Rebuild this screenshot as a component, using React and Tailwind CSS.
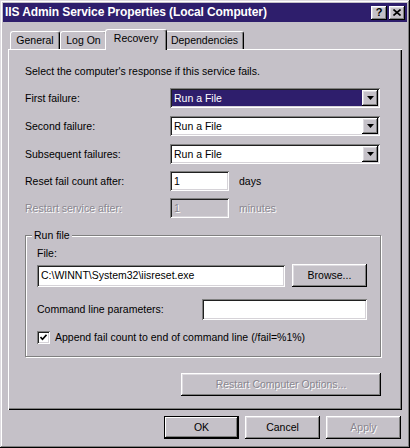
const raised =
  'shadow-[inset_-1px_-1px_0_#000,inset_1px_1px_0_#fff,inset_-2px_-2px_0_#808080,inset_2px_2px_0_#dedbe0]'
const sunken =
  'shadow-[inset_1px_1px_0_#808080,inset_-1px_-1px_0_#fff,inset_2px_2px_0_#202020,inset_-2px_-2px_0_#d6d3d8]'
const disabledText = 'text-[#8a8790] [text-shadow:1px_1px_0_#fff]'

function Arrow() {
  return (
    <div className={`w-[16px] h-[16px] bg-[#c5c1c8] flex items-center justify-center ${raised}`}>
      <svg width="7" height="4" viewBox="0 0 7 4">
        <path d="M0 0h7L3.5 4z" fill="#000" />
      </svg>
    </div>
  )
}

function Combo({ value, selected }) {
  return (
    <div className={`w-[210px] h-[20px] bg-white flex items-center p-[2px] ${sunken}`}>
      <div
        className={`flex-1 h-full flex items-center pl-[2px] ${selected ? 'bg-[#2e1e6c] text-white' : ''}`}
      >
        {value}
      </div>
      <Arrow />
    </div>
  )
}

function Button({ children, w, disabled, isDefault }) {
  return (
    <div
      className={`h-[23px] ${w} flex items-center justify-center bg-[#c5c1c8] ${
        isDefault
          ? 'border border-black shadow-[inset_-1px_-1px_0_#000,inset_1px_1px_0_#fff,inset_-2px_-2px_0_#808080]'
          : raised
      } ${disabled ? disabledText : ''}`}
    >
      {children}
    </div>
  )
}

function Tab({ label, w, active }) {
  return (
    <div
      className={`${w} flex items-center justify-center bg-[#c5c1c8] border-l border-t border-white border-r border-r-black rounded-t-[3px] shadow-[inset_-1px_0_0_#808080] ${
        active ? 'h-[21px] -mx-[2px] -mb-px z-10 relative pb-[3px]' : 'h-[18px] pb-[1px]'
      }`}
    >
      {label}
    </div>
  )
}

function Row({ label, children, mt, disabled }) {
  return (
    <div className={`flex items-center h-[20px] ${mt}`}>
      <div className={`w-[145px] ${disabled ? disabledText : ''}`}>{label}</div>
      {children}
    </div>
  )
}

export default function App() {
  return (
    <div
      className={`w-[410px] h-[448px] bg-[#c5c1c8] p-[3px] flex flex-col overflow-hidden text-[10.5px] leading-[13px] text-black font-['Liberation_Sans',Arial,sans-serif] shadow-[inset_-1px_-1px_0_#000,inset_1px_1px_0_#dedbe0,inset_-2px_-2px_0_#808080,inset_2px_2px_0_#fff]`}
    >
      <div className="h-[19px] bg-[#2e1e6c] flex items-center pl-[2px] pr-[2px]">
        <span className="text-white font-bold text-[12px] tracking-[-0.1px]">
          IIS Admin Service Properties (Local Computer)
        </span>
        <div className="ml-auto flex gap-[2px]">
          <div className={`w-[16px] h-[14px] flex items-center justify-center font-bold text-[11px] ${raised} bg-[#c5c1c8]`}>
            ?
          </div>
          <div className={`w-[16px] h-[14px] flex items-center justify-center ${raised} bg-[#c5c1c8]`}>
            <svg width="8" height="7" viewBox="0 0 8 7">
              <path d="M0.5 0.5l7 6M7.5 0.5l-7 6" stroke="#000" strokeWidth="1.6" />
            </svg>
          </div>
        </div>
      </div>

      <div className="ml-[5px] mt-[7px] flex items-end h-[20px] pl-[2px]">
        <Tab label="General" w="w-[50px]" />
        <Tab label="Log On" w="w-[47px]" />
        <Tab label="Recovery" w="w-[62px]" active />
        <Tab label="Dependencies" w="w-[79px]" />
      </div>

      <div className="ml-[5px] w-[394px] h-[361px] flex flex-col pl-[17px] shadow-[inset_1px_1px_0_#fff,inset_-1px_-1px_0_#000,inset_-2px_-2px_0_#808080]">
        <div className="mt-[16px]">Select the computer's response if this service fails.</div>
        <Row label="First failure:" mt="mt-[10px]">
          <Combo value="Run a File" selected />
        </Row>
        <Row label="Second failure:" mt="mt-[8px]">
          <Combo value="Run a File" />
        </Row>
        <Row label="Subsequent failures:" mt="mt-[8px]">
          <Combo value="Run a File" />
        </Row>
        <Row label="Reset fail count after:" mt="mt-[7px]">
          <div className={`w-[59px] h-[20px] bg-white flex items-center pl-[4px] ${sunken}`}>1</div>
          <span className="ml-[10px]">days</span>
        </Row>
        <Row label="Restart service after:" mt="mt-[7px]" disabled>
          <div className={`w-[59px] h-[20px] bg-[#c5c1c8] flex items-center pl-[4px] ${sunken} ${disabledText}`}>1</div>
          <span className={`ml-[10px] ${disabledText}`}>minutes</span>
        </Row>

        <div className="relative mt-[17px] w-[356px] h-[122px] border border-[#808080] shadow-[1px_1px_0_#fff,inset_1px_1px_0_#fff] flex flex-col pl-[11px]">
          <span className="absolute -top-[7px] left-[6px] px-[2px] bg-[#c5c1c8]">Run file</span>
          <div className="mt-[11px]">File:</div>
          <div className="mt-[4px] flex items-center">
            <div className={`w-[248px] h-[22px] bg-white flex items-center pl-[4px] ${sunken}`}>
              C:\WINNT\System32\iisreset.exe
            </div>
            <div className="ml-[7px]">
              <Button w="w-[75px]">Browse...</Button>
            </div>
          </div>
          <div className="mt-[12px] flex items-center">
            <div className="w-[165px]">Command line parameters:</div>
            <div className={`w-[165px] h-[21px] bg-white ${sunken}`} />
          </div>
          <div className="mt-[11px] flex items-center">
            <div className={`w-[13px] h-[13px] bg-white flex items-center justify-center ${sunken}`}>
              <svg width="7" height="7" viewBox="0 0 7 7">
                <path d="M0.5 3l2 2.2L6.5 0.8" stroke="#000" strokeWidth="1.6" fill="none" />
              </svg>
            </div>
            <span className="ml-[5px]">Append fail count to end of command line (/fail=%1%)</span>
          </div>
        </div>

        <div className="mt-[16px] ml-[156px]">
          <Button w="w-[200px]" disabled>Restart Computer Options...</Button>
        </div>
      </div>

      <div className="mt-[6px] flex gap-[6px] pl-[161px]">
        <Button w="w-[75px]" isDefault>OK</Button>
        <Button w="w-[75px]">Cancel</Button>
        <Button w="w-[75px]" disabled>Apply</Button>
      </div>
    </div>
  )
}
